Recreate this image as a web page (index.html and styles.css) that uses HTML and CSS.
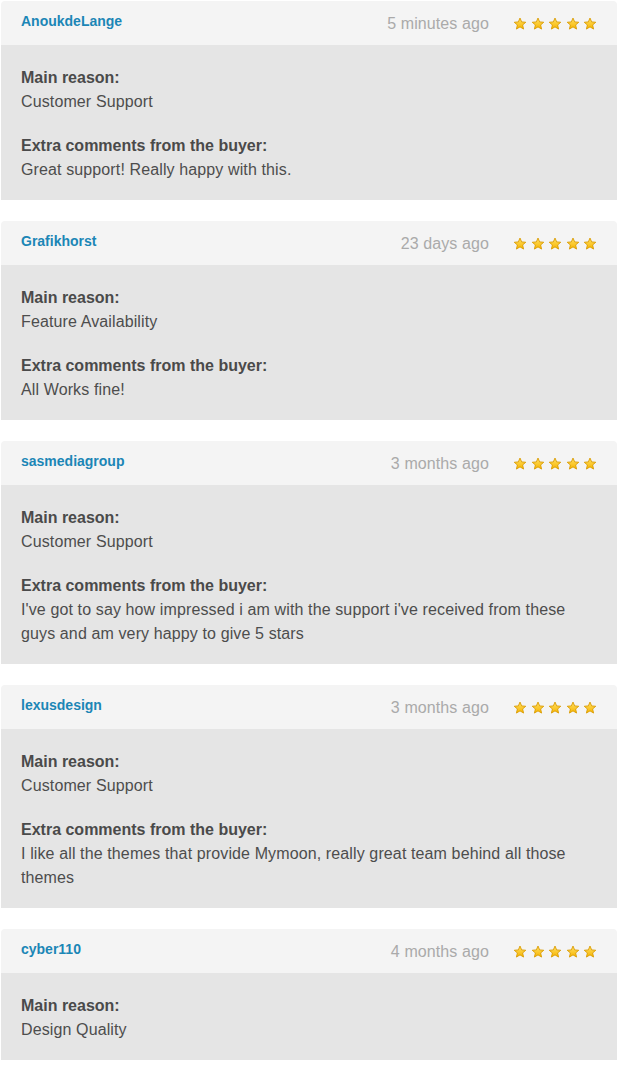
FILE: index.html
```html
<!DOCTYPE html>
<html>
<head>
<meta charset="utf-8">
<link rel="stylesheet" href="styles.css">
</head>
<body>
<svg width="0" height="0" class="defs">
  <defs>
    <linearGradient id="sg" x1="0" y1="0" x2="0" y2="1">
      <stop offset="0" stop-color="#ffe066"/>
      <stop offset="1" stop-color="#f7b500"/>
    </linearGradient>
    <symbol id="star" viewBox="0 0 16 16">
      <path d="M8 1.2 L9.9 5.6 L14.6 6 L11 9.1 L12.1 13.8 L8 11.3 L3.9 13.8 L5 9.1 L1.4 6 L6.1 5.6 Z" fill="url(#sg)" stroke="#d99a00" stroke-width="1" stroke-linejoin="round"/>
    </symbol>
  </defs>
</svg>
<div class="list">
  <div class="card">
    <div class="head">
      <span class="user">AnoukdeLange</span>
      <span class="date">5 minutes ago</span>
      <span class="stars"><svg><use href="#star"/></svg><svg><use href="#star"/></svg><svg><use href="#star"/></svg><svg><use href="#star"/></svg><svg><use href="#star"/></svg></span>
    </div>
    <div class="body">
      <p><b>Main reason:</b><br>Customer Support</p>
      <p><b>Extra comments from the buyer:</b><br>Great support! Really happy with this.</p>
    </div>
  </div>
  <div class="card">
    <div class="head">
      <span class="user">Grafikhorst</span>
      <span class="date">23 days ago</span>
      <span class="stars"><svg><use href="#star"/></svg><svg><use href="#star"/></svg><svg><use href="#star"/></svg><svg><use href="#star"/></svg><svg><use href="#star"/></svg></span>
    </div>
    <div class="body">
      <p><b>Main reason:</b><br>Feature Availability</p>
      <p><b>Extra comments from the buyer:</b><br>All Works fine!</p>
    </div>
  </div>
  <div class="card">
    <div class="head">
      <span class="user">sasmediagroup</span>
      <span class="date">3 months ago</span>
      <span class="stars"><svg><use href="#star"/></svg><svg><use href="#star"/></svg><svg><use href="#star"/></svg><svg><use href="#star"/></svg><svg><use href="#star"/></svg></span>
    </div>
    <div class="body">
      <p><b>Main reason:</b><br>Customer Support</p>
      <p><b>Extra comments from the buyer:</b><br>I've got to say how impressed i am with the support i've received from these guys and am very happy to give 5 stars</p>
    </div>
  </div>
  <div class="card">
    <div class="head">
      <span class="user">lexusdesign</span>
      <span class="date">3 months ago</span>
      <span class="stars"><svg><use href="#star"/></svg><svg><use href="#star"/></svg><svg><use href="#star"/></svg><svg><use href="#star"/></svg><svg><use href="#star"/></svg></span>
    </div>
    <div class="body">
      <p><b>Main reason:</b><br>Customer Support</p>
      <p><b>Extra comments from the buyer:</b><br>I like all the themes that provide Mymoon, really great team behind all those themes</p>
    </div>
  </div>
  <div class="card">
    <div class="head">
      <span class="user">cyber110</span>
      <span class="date">4 months ago</span>
      <span class="stars"><svg><use href="#star"/></svg><svg><use href="#star"/></svg><svg><use href="#star"/></svg><svg><use href="#star"/></svg><svg><use href="#star"/></svg></span>
    </div>
    <div class="body">
      <p><b>Main reason:</b><br>Design Quality</p>
    </div>
  </div>
</div>
</body>
</html>
```

FILE: styles.css
```css
html, body {
  margin: 0;
  padding: 0;
  background: #fff;
}
body {
  font-family: "Liberation Sans", Arial, sans-serif;
  color: #4d4d4d;
}
.defs {
  position: absolute;
  width: 0;
  height: 0;
}
.list {
  padding: 1px 1px 0 1px;
  display: flex;
  flex-direction: column;
  gap: 21px;
}
.card {
  border-radius: 4px 4px 0 0;
  overflow: hidden;
}
.head {
  height: 44px;
  background: #f4f4f4;
  display: flex;
  align-items: center;
  padding: 0 20px;
}
.user {
  font-size: 14px;
  font-weight: bold;
  color: #1b86b6;
  position: relative;
  top: -2px;
}
.date {
  margin-left: auto;
  font-size: 16px;
  letter-spacing: 0.1px;
  color: #aaaaaa;
  position: relative;
  top: 1px;
}
.stars {
  display: flex;
  margin-left: 24px;
  gap: 3.5px;
  position: relative;
  top: 1px;
}
.stars svg {
  width: 14px;
  height: 14px;
  display: block;
}
.body {
  background: #e5e5e5;
  padding: 21px 20px 18px;
  font-size: 16px;
  line-height: 24px;
  letter-spacing: 0.12px;
}
.body p {
  margin: 0 0 20px;
}
.body p:last-child {
  margin-bottom: 0;
}
.body b {
  color: #4a4a4a;
  letter-spacing: 0;
}
```
